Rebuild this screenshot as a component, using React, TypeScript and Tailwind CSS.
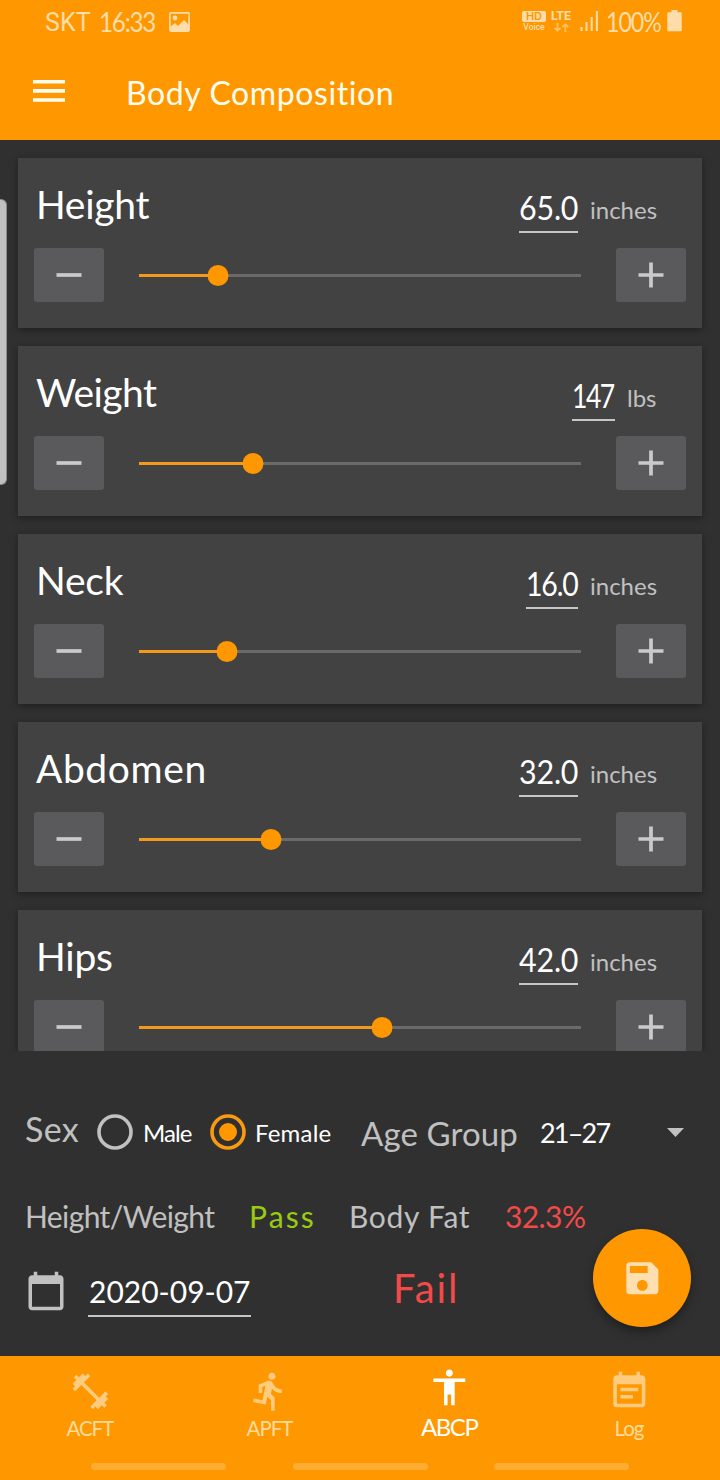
import type { IconType } from "react-icons";
import {
  MdAccessibility,
  MdCalendarToday,
  MdDirectionsRun,
  MdEventNote,
  MdFitnessCenter,
  MdSave,
} from "react-icons/md";

type Measure = {
  name: string;
  value: string;
  unit: string;
  percent: number;
  nameClass: string;
  boxClass: string;
  valueClass: string;
  unitClass: string;
};

const measures: Measure[] = [
  { name: "Height", value: "65.0", unit: "inches", percent: 17.9, nameClass: "tracking-[-0.3px]", boxClass: "w-[59px]", valueClass: "tracking-[-0.2px] scale-x-[0.95]", unitClass: "w-[68px]" },
  { name: "Weight", value: "147", unit: "lbs", percent: 25.8, nameClass: "tracking-[-0.6px]", boxClass: "w-[43px]", valueClass: "tracking-[-1.8px] scale-x-[0.83]", unitClass: "w-[31px]" },
  { name: "Neck", value: "16.0", unit: "inches", percent: 20, nameClass: "tracking-[-0.2px]", boxClass: "w-[52px]", valueClass: "tracking-[-1.3px] scale-x-[0.89]", unitClass: "w-[68px]" },
  { name: "Abdomen", value: "32.0", unit: "inches", percent: 29.9, nameClass: "tracking-[0.6px]", boxClass: "w-[59px]", valueClass: "tracking-[-0.2px] scale-x-[0.95]", unitClass: "w-[68px]" },
  { name: "Hips", value: "42.0", unit: "inches", percent: 55, nameClass: "tracking-[-0.2px]", boxClass: "w-[59px]", valueClass: "tracking-[-0.2px] scale-x-[0.95]", unitClass: "w-[68px]" },
];

function StepButton({ plus }: { plus?: boolean }) {
  return (
    <button className="flex h-[54px] w-[70px] shrink-0 items-center justify-center rounded-[3px] bg-[#5a5a5c]">
      <svg width="26" height="26" viewBox="0 0 26 26" stroke="#cacaca" strokeWidth="3.7">
        <path d={plus ? "M0.5 13h25M13 0.5v25" : "M0.5 13h25"} />
      </svg>
    </button>
  );
}

function MeasureCard({ m }: { m: Measure }) {
  return (
    <section className="h-[170px] shrink-0 bg-[#424242] shadow-[0_2px_7px_rgba(0,0,0,0.36)]">
      <div className="flex h-[90px] items-start pr-[44px] pl-[18px]">
        <h2 className={`mt-[26px] flex-1 text-[39px] leading-[40px] whitespace-nowrap text-white ${m.nameClass}`}>{m.name}</h2>
        <div className={`mt-[31px] h-[44px] border-b-2 border-[#c6c6c6] pt-[1px] text-[32px] leading-[36px] whitespace-nowrap text-white ${m.boxClass}`}>
          <span className={`block origin-left ${m.valueClass}`}>{m.value}</span>
        </div>
        <div className={`mt-[34px] ml-[12px] text-[24px] leading-[36px] whitespace-nowrap text-[#c0c0c0] ${m.unitClass}`}>{m.unit}</div>
      </div>
      <div className="flex items-center justify-between px-4">
        <StepButton />
        <div className="relative flex h-[21px] w-[442px] items-center">
          <div className="h-[3px] w-full bg-[#6a6a6a]">
            <div className="h-full bg-[#f39a1c]" style={{ width: `${m.percent}%` }} />
          </div>
          <div className="absolute top-0 size-[21px] -translate-x-1/2 rounded-full bg-[#ff9800]" style={{ left: `${m.percent}%` }} />
        </div>
        <StepButton plus />
      </div>
    </section>
  );
}

function Radio({ checked }: { checked?: boolean }) {
  return (
    <svg className="mt-[63px] shrink-0" width="36" height="36" viewBox="0 0 36 36">
      <circle cx="18" cy="18" r="16" fill="none" stroke={checked ? "#f99a12" : "#c1c1c1"} strokeWidth="3.6" />
      {checked && <circle cx="18" cy="18" r="9" fill="#ff9800" />}
    </svg>
  );
}

function StatusBar() {
  return (
    <div className="flex h-[44px] items-start text-[#ffddaa]">
      <span className="mt-[9px] ml-[45px] w-[54px] font-['Roboto'] text-[25px] leading-[28px] tracking-[0.1px] whitespace-nowrap">SKT</span>
      <span className="mt-[8px] w-[70px] origin-left scale-x-[0.93] text-[26px] leading-[28px] tracking-[-1.3px] whitespace-nowrap">16:33</span>
      <svg className="mt-[12px]" width="21" height="20" viewBox="0 0 21 20">
        <rect x="0.9" y="0.9" width="19.2" height="18.2" rx="1" fill="none" stroke="currentColor" strokeWidth="1.6" />
        <circle cx="6" cy="6" r="2.4" fill="currentColor" />
        <path d="M1 15l5-4 3 3 6-6 5 5v6H1z" fill="currentColor" />
      </svg>
      <div className="mt-[11px] ml-[332px] flex w-[24px] flex-col items-center">
        <span className="flex h-[11px] w-[24px] items-center justify-center rounded-[2px] bg-[#ffddaa] font-['Inter'] text-[11px] leading-[11px] font-semibold text-[#ff9800]">HD</span>
        <span className="font-['Roboto'] text-[8.5px] leading-[10px] font-medium">Voice</span>
      </div>
      <div className="mt-[9px] ml-[4px] flex w-[22px] flex-col items-center">
        <span className="mt-px font-['Roboto'] text-[12.5px] leading-[12px] font-bold">LTE</span>
        <svg className="mt-[1px] text-[#ffc061]" width="15" height="9" viewBox="0 0 15 9" fill="none" stroke="currentColor" strokeWidth="1.8">
          <path d="M3.5 0v7.5M0.6 4.8l2.9 2.9 2.9-2.9M11.3 9V1.5M8.4 4.2l2.9-2.9 2.9 2.9" />
        </svg>
      </div>
      <svg className="mt-[11px] ml-[8px]" width="19" height="20" viewBox="0 0 19 20" fill="currentColor">
        <path d="M0.5 16h2v4h-2zM5.5 11h2v9h-2zM10.7 6h2v14h-2zM15.9 0h2v20h-2z" />
      </svg>
      <span className="mt-[8px] ml-[7px] w-[61px] origin-left scale-x-[0.86] text-[27px] leading-[28px] tracking-[-1.2px] whitespace-nowrap">100%</span>
      <svg className="mt-[10px]" width="15" height="22" viewBox="0 0 15 22" fill="currentColor">
        <path d="M4.5 0h6v2.3H14a0.7 0.7 0 0 1 .7.7v17.5a0.7 0.7 0 0 1-.7.7H1a0.7 0.7 0 0 1-.7-.7V3a0.7 0.7 0 0 1 .7-.7h3.5z" />
      </svg>
    </div>
  );
}

function NavItem({ icon: Icon, label, active }: { icon: IconType; label: string; active?: boolean }) {
  return (
    <button className={`flex w-[179.7px] flex-col items-center ${active ? "pt-[10px] text-white" : "pt-[14px] text-[#ffcb7f]"}`}>
      <Icon size={42.7} />
      <span className={active ? "mt-[4px] text-[24px] leading-[28px] tracking-[-1.4px]" : "mt-[1.5px] text-[20.5px] leading-[28px] tracking-[-1px] text-[#ffdc9c]"}>{label}</span>
    </button>
  );
}

export default function App() {
  return (
    <div className="relative flex h-[1480px] w-[720px] flex-col overflow-hidden bg-[#303030] font-['Lato','Noto_Sans',sans-serif]">
      <header className="h-[140px] shrink-0 bg-[#ff9800]">
        <StatusBar />
        <div className="flex items-start">
          <svg className="mt-[36px] ml-[33px]" width="32" height="22" viewBox="0 0 32 22" fill="#fffdf0">
            <path d="M0 0h32v3.6H0zM0 9.1h32v3.6H0zM0 18.2h32v3.6H0z" />
          </svg>
          <h1 className="mt-[29px] ml-[61px] text-[32px] leading-[40px] tracking-[0.6px] whitespace-nowrap text-[#fffdf0]">Body Composition</h1>
        </div>
      </header>

      <main className="flex h-[911px] shrink-0 flex-col gap-[18px] overflow-hidden px-[18px] pt-[18px]">
        {measures.map((m) => (
          <MeasureCard key={m.name} m={m} />
        ))}
      </main>

      <section className="h-[305px] shrink-0 leading-[40px] whitespace-nowrap text-[#c0c0c0]">
        <div className="flex h-[144px] items-start pl-[25px]">
          <span className="mt-[58px] w-[72px] text-[34px] tracking-[0.3px]">Sex</span>
          <Radio />
          <span className="mt-[62px] ml-[10px] w-[67px] text-[24px] tracking-[-0.9px] text-white">Male</span>
          <Radio checked />
          <span className="mt-[62px] ml-[9px] w-[106px] text-[24px] tracking-[0.2px] text-white">Female</span>
          <span className="mt-[62px] w-[179px] text-[33px] tracking-[0.1px]">Age Group</span>
          <span className="mt-[62px] w-[127px] text-[27px] tracking-[-1.8px] text-white">21–27</span>
          <svg className="mt-[77px]" width="17" height="9" viewBox="0 0 17 9" fill="#c1c1c1">
            <path d="M0 0h17L8.5 9z" />
          </svg>
        </div>
        <div className="flex h-[40px] pt-px pl-[25px] text-[30px]">
          <span className="w-[224px] tracking-[-0.6px]">Height/Weight</span>
          <span className="w-[100px] tracking-[2.1px] text-[#99cc10]">Pass</span>
          <span className="w-[156px] tracking-[0.7px]">Body Fat</span>
          <span className="tracking-[-0.6px] text-[#f24a48]">32.3%</span>
        </div>
        <div className="flex items-start pl-[25px]">
          <MdCalendarToday className="mt-[35px] shrink-0 text-[#c1c1c1]" size={42} />
          <div className="mt-[35px] ml-[21px] h-[47px] w-[163px] border-b-2 border-[#c6c6c6] pt-px pl-px text-[30px] text-white">2020-09-07</div>
          <span className="mt-[33px] ml-[142px] text-[40px] tracking-[1.9px] text-[#f24a48]">Fail</span>
        </div>
      </section>

      <nav className="h-[124px] shrink-0 bg-[#ff9800]">
        <div className="flex h-[107px]">
          <NavItem icon={MdFitnessCenter} label="ACFT" />
          <NavItem icon={MdDirectionsRun} label="APFT" />
          <NavItem icon={MdAccessibility} label="ABCP" active />
          <NavItem icon={MdEventNote} label="Log" />
        </div>
        <div className="flex gap-[66.5px] pl-[91px]">
          <div className="h-[7px] w-[135px] rounded-full bg-[#ffac33]" />
          <div className="h-[7px] w-[135px] rounded-full bg-[#ffac33]" />
          <div className="h-[7px] w-[135px] rounded-full bg-[#ffac33]" />
        </div>
      </nav>

      <div className="absolute top-[199px] left-0 h-[286px] w-[7px] rounded-r-[6px] border-y border-r border-[#8b8b8b] bg-[#c1c1c1]" />
      <button className="absolute top-[1229px] left-[593px] flex size-[98px] items-center justify-center rounded-full bg-[#ff9800] text-[#ffdfb0] shadow-[0_5px_10px_rgba(0,0,0,0.35)]">
        <MdSave size={42.7} />
      </button>
    </div>
  );
}
